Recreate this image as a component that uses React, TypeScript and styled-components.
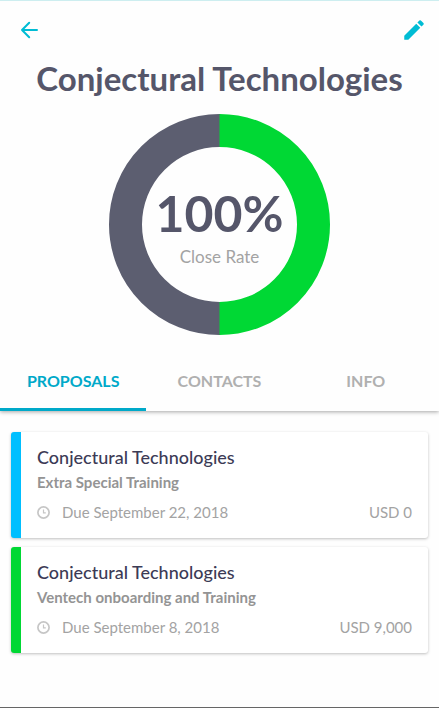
import React, { useState } from "react";
import styled, { createGlobalStyle } from "styled-components";

const colors = {
  accent: "#00bcd4",
  tabActive: "#00a9c9",
  slate: "#55566a",
  ring: "#5c5e70",
  green: "#00d834",
  blue: "#00bfff",
  heading: "#3c3b56",
  muted: "#949494",
  faint: "#a3a3a3",
  tab: "#b0b0b0",
};

const GlobalStyle = createGlobalStyle`
  *, *::before, *::after { box-sizing: border-box; }
  body {
    margin: 0;
    background: #fefefe;
    font-family: Lato, "Open Sans", sans-serif;
  }
  h1, h2, p { margin: 0; }
`;

const Page = styled.div`
  display: flex;
  flex-direction: column;
  min-height: 100vh;
  border-top: 1px solid #cdeef0;
  border-bottom: 1px solid #666;
`;

const Toolbar = styled.header`
  display: flex;
  align-items: center;
  justify-content: space-between;
  padding: 16px 12px 0 17px;
`;

const IconButton = styled.button`
  display: flex;
  padding: 0;
  border: 0;
  background: none;
  color: ${colors.accent};
  cursor: pointer;
`;

const Title = styled.h1`
  margin-top: 15px;
  font-size: 33px;
  line-height: 40px;
  font-weight: 700;
  text-align: center;
  color: ${colors.slate};
`;

const Chart = styled.figure`
  display: grid;
  place-items: center;
  margin: 16px auto 0;
  > * { grid-area: 1 / 1; }
`;

const ChartLabel = styled.figcaption`
  display: flex;
  flex-direction: column;
  align-items: center;
  gap: 4px;
`;

const Rate = styled.span`
  font-size: 50px;
  line-height: 60px;
  font-weight: 700;
  color: ${colors.slate};
`;

const RateCaption = styled.span`
  font-size: 17px;
  line-height: 20px;
  color: ${colors.faint};
`;

const Tabs = styled.div`
  display: grid;
  grid-template-columns: repeat(3, 1fr);
  margin-top: 16px;
  box-shadow: 0 1px 4px rgba(0, 0, 0, 0.35);
  clip-path: inset(0 0 -8px 0);
`;

const Tab = styled.button<{ $active: boolean }>`
  height: 60px;
  padding: 2px 0 0;
  border: 0;
  border-bottom: 3px solid ${(p) => (p.$active ? colors.tabActive : "transparent")};
  background: none;
  font: 700 16px/20px Lato, "Open Sans", sans-serif;
  color: ${(p) => (p.$active ? colors.tabActive : colors.tab)};
  cursor: pointer;
`;

const CardList = styled.main`
  display: flex;
  flex-direction: column;
  gap: 9px;
  padding: 21px 11px;
`;

const Card = styled.article<{ $stripe: string }>`
  padding: 15px 16px 16px;
  border-left: 10px solid ${(p) => p.$stripe};
  border-radius: 3px;
  background: #fff;
  box-shadow: 0 1px 3px rgba(0, 0, 0, 0.25);
`;

const CardTitle = styled.h2`
  font-size: 18px;
  line-height: 20px;
  font-weight: 500;
  color: ${colors.heading};
`;

const CardSubtitle = styled.p`
  padding-top: 5px;
  font-size: 15px;
  line-height: 20px;
  font-weight: 700;
  color: ${colors.muted};
`;

const CardMeta = styled.div`
  display: flex;
  align-items: center;
  padding-top: 10px;
  font-size: 15px;
  line-height: 20px;
  color: ${colors.faint};
`;

const Due = styled.span`
  flex: 1;
  padding-left: 12px;
`;

const BackIcon = () => (
  <svg width="24" height="24" viewBox="0 0 24 24" fill="none" stroke="currentColor" strokeWidth="2" strokeLinecap="round" strokeLinejoin="round" aria-hidden="true">
    <path d="M20 12H5M12.2 4.7 5 12l7.2 7.3" />
  </svg>
);

const PencilIcon = () => (
  <svg width="26" height="26" viewBox="0 0 24 24" fill="currentColor" aria-hidden="true">
    <path d="M3 17.25V21h3.75L17.81 9.94l-3.75-3.75L3 17.25zM20.71 7.04a1 1 0 0 0 0-1.41l-2.34-2.34a1 1 0 0 0-1.41 0l-1.83 1.83 3.75 3.75 1.83-1.83z" />
  </svg>
);

const ClockIcon = () => (
  <svg width="13" height="13" viewBox="0 0 13 13" fill="none" stroke="#c6c6c6" aria-hidden="true">
    <circle cx="6.5" cy="6.5" r="5.6" strokeWidth="1.7" />
    <path d="M6.5 3.5v3.3h2.3" strokeWidth="1.2" />
  </svg>
);

const Ring = () => (
  <svg width="221" height="221" viewBox="0 0 221 221" fill="none" strokeWidth="33" aria-hidden="true">
    <path d="M111 204.5h-.5a94 94 0 0 1 0-188h.5" stroke={colors.ring} />
    <path d="M110.5 16.5a94 94 0 0 1 0 188" stroke={colors.green} />
  </svg>
);

const tabs = ["PROPOSALS", "CONTACTS", "INFO"];

const proposals = [
  { client: "Conjectural Technologies", name: "Extra Special Training", due: "Due September 22, 2018", value: "USD 0", stripe: colors.blue },
  { client: "Conjectural Technologies", name: "Ventech onboarding and Training", due: "Due September 8, 2018", value: "USD 9,000", stripe: colors.green },
];

export default function App() {
  const [active, setActive] = useState(tabs[0]);
  return (
    <Page>
      <GlobalStyle />
      <Toolbar>
        <IconButton type="button" aria-label="Back"><BackIcon /></IconButton>
        <IconButton type="button" aria-label="Edit"><PencilIcon /></IconButton>
      </Toolbar>
      <Title>Conjectural Technologies</Title>
      <Chart>
        <Ring />
        <ChartLabel>
          <Rate>100%</Rate>
          <RateCaption>Close Rate</RateCaption>
        </ChartLabel>
      </Chart>
      <Tabs role="tablist">
        {tabs.map((t) => (
          <Tab key={t} type="button" role="tab" aria-selected={t === active} $active={t === active} onClick={() => setActive(t)}>
            {t}
          </Tab>
        ))}
      </Tabs>
      <CardList>
        {proposals.map((p) => (
          <Card key={p.name} $stripe={p.stripe}>
            <CardTitle>{p.client}</CardTitle>
            <CardSubtitle>{p.name}</CardSubtitle>
            <CardMeta>
              <ClockIcon />
              <Due>{p.due}</Due>
              <span>{p.value}</span>
            </CardMeta>
          </Card>
        ))}
      </CardList>
    </Page>
  );
}
